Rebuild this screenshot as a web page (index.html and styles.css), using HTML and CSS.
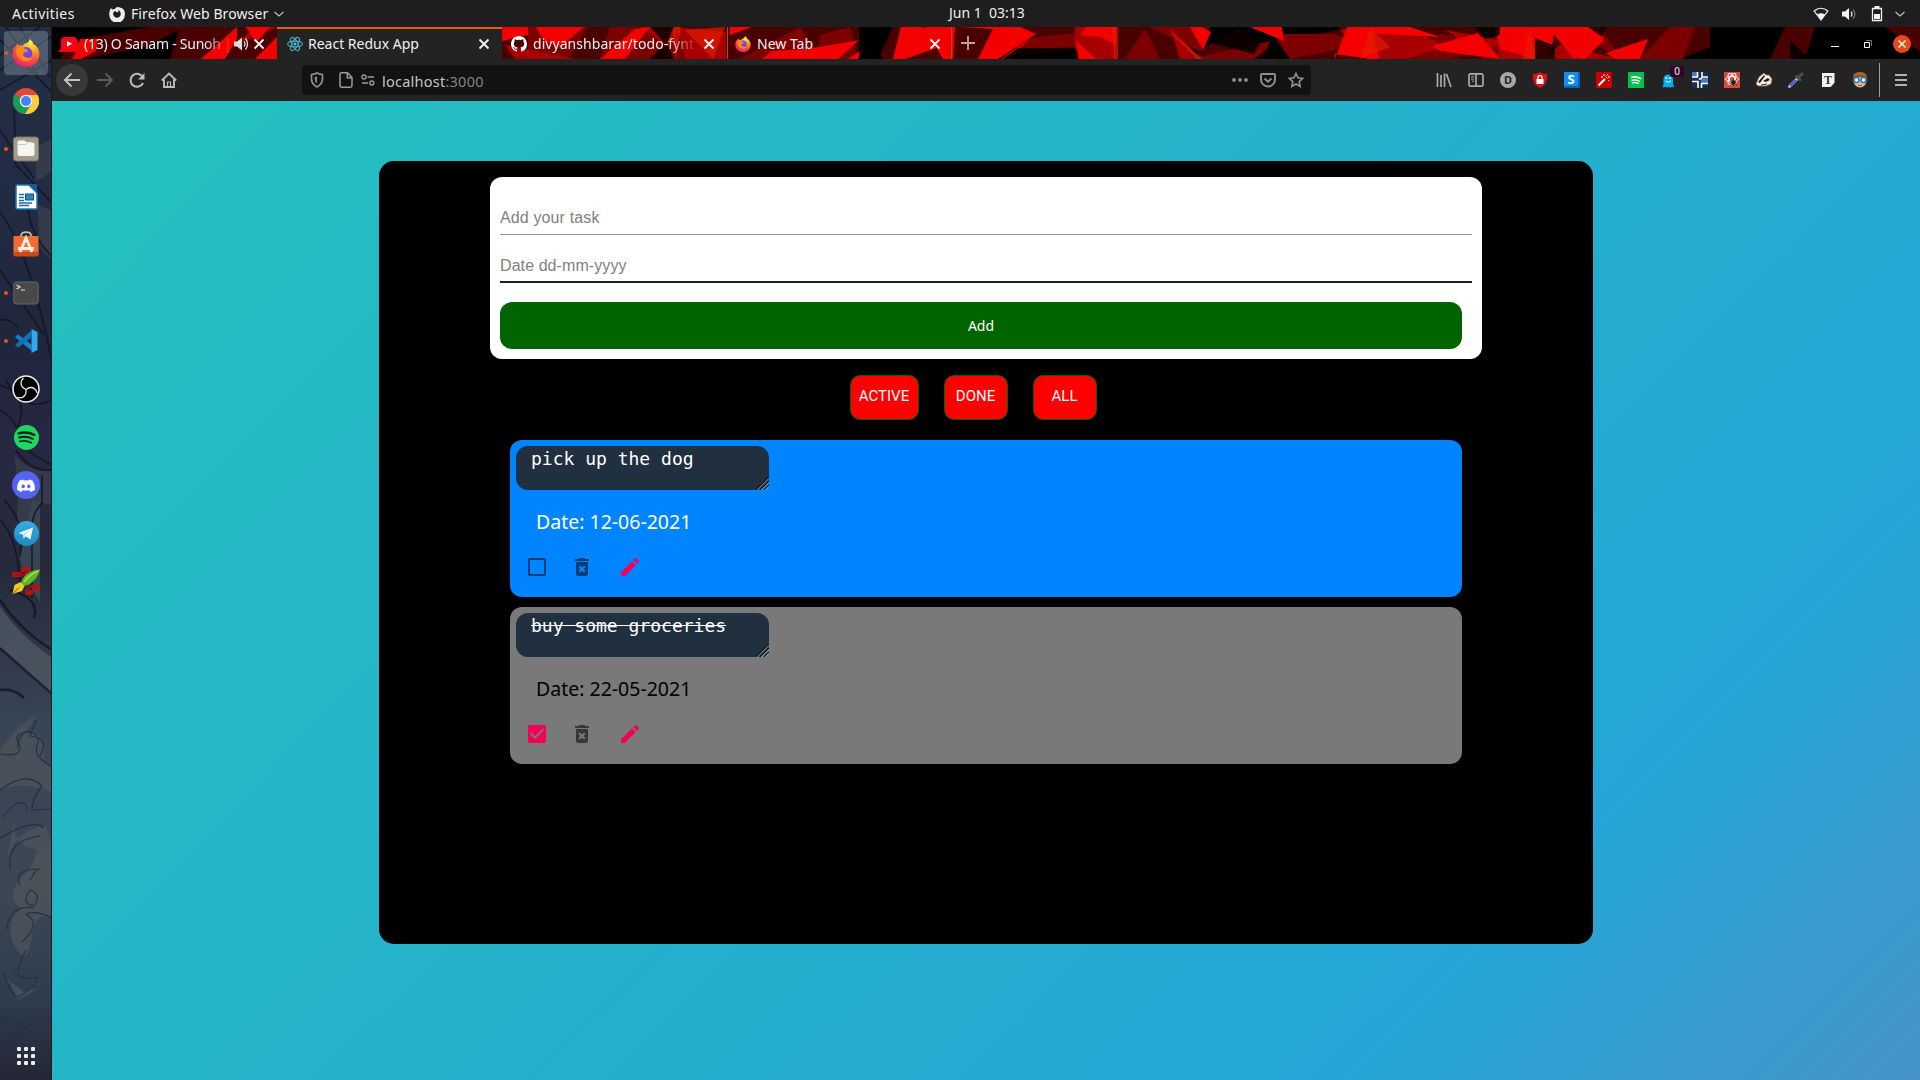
FILE: index.html
```html
<!DOCTYPE html>
<html lang="en">
<head>
<meta charset="utf-8">
<title>React Redux App</title>
<link rel="stylesheet" href="styles.css">
</head>
<body>
<svg class="defs" width="0" height="0">
  <defs>
    <radialGradient id="flame" cx="0.7" cy="0.1" r="1"><stop offset="0" stop-color="#fff44f"/><stop offset=".35" stop-color="#ffa81f"/><stop offset=".65" stop-color="#ff4f3e"/><stop offset="1" stop-color="#e21a7a"/></radialGradient>
    <radialGradient id="globe" cx=".5" cy=".3" r=".7"><stop offset="0" stop-color="#5a5cf0"/><stop offset="1" stop-color="#9a2ad8"/></radialGradient>
    <linearGradient id="telegram" x1="0" y1="0" x2="0" y2="1"><stop offset="0" stop-color="#37aee2"/><stop offset="1" stop-color="#1e88c4"/></linearGradient>
    <linearGradient id="wallpaper" x1="0" y1="0" x2="0" y2="1"><stop offset="0" stop-color="#232f42"/><stop offset=".12" stop-color="#222d45"/><stop offset=".3" stop-color="#20263c"/><stop offset=".4" stop-color="#272743"/><stop offset=".52" stop-color="#252b3d"/><stop offset=".66" stop-color="#384555"/><stop offset=".82" stop-color="#3d4753"/><stop offset=".92" stop-color="#2e3d4f"/><stop offset="1" stop-color="#242634"/></linearGradient>
    <symbol id="firefox" viewBox="0 0 26 26">
      <path fill="url(#flame)" d="M5 4c.6 1 1 1.600 2 2.400C8 6 9 6 10 6.300c1-1.500 2.800-2.400 4-2.500 1-.8 2-2.200 2.300-3.800 2 1.500 3.200 3.200 3.700 5 1.500.8 2 .6 2.500 1.500 2 2.500 3 5 3 8C25.500 21 20 26 13 26S.5 21 .5 14c0-3 1-5 2-6.500C3.500 6.500 4.500 5.500 5 4z"/>
      <circle cx="13" cy="13.500" r="6" fill="url(#globe)"/>
      <path fill="#ff8a16" d="M4 9c2-1.500 4-1.500 6-1 1.500 1 2.500 2 5 2.200-.5 1.800-3 2-4.200 2.600-.8 1.200-.6 3 1 4C15 18.200 17 17 19 17.500 17 20.500 13 21.500 9.500 20 5.500 18 3 14 4 9z"/>
    </symbol>
    <symbol id="spotify" viewBox="0 0 24 24">
      <circle cx="12" cy="12" r="12" fill="#1ed760"/>
      <g fill="none" stroke="#12241a" stroke-linecap="round"><path stroke-width="2.300" d="M4.500 8c5-1.300 10.500-.8 15 1.500"/><path stroke-width="2" d="M5 12c4.500-1.200 9-.7 13 1.300"/><path stroke-width="1.600" d="M5.500 15.700c4-.9 7.800-.5 11.200 1.300"/></g>
    </symbol>
    <symbol id="close" viewBox="0 0 16 16"><path d="M3.500 3.500l9 9M12.500 3.500l-9 9" stroke="#f2f2f2" stroke-width="1.900" fill="none"/></symbol>
    <symbol id="bin" viewBox="0 0 24 24"><path d="M6 19c0 1.100.9 2 2 2h8c1.100 0 2-.9 2-2V7H6v12zm2.460-7.120l1.410-1.410L12 12.590l2.120-2.120 1.410 1.410L13.410 14l2.120 2.120-1.410 1.410L12 15.410l-2.120 2.120-1.410-1.410L10.590 14l-2.130-2.120zM15.500 4l-1-1h-5l-1 1H5v2h14V4z"/></symbol>
    <symbol id="pencil" viewBox="0 0 24 24"><path d="M3 17.250V21h3.750L17.810 9.940l-3.750-3.750L3 17.250zM20.710 7.040c.39-.39.39-1.020 0-1.410l-2.340-2.340c-.39-.39-1.020-.39-1.410 0l-1.830 1.830 3.750 3.750 1.830-1.830z"/></symbol>
    <symbol id="grip" viewBox="0 0 13 13"><path d="M0 13L13 0M4 13l9-9M8 13l5-5" stroke="#10161c" stroke-width="1.300"/><path d="M1.300 13L13 1.300M5.300 13L13 5.300M9.300 13L13 9.300" stroke="#a9b0b5" stroke-width=".9"/></symbol>
  </defs>
</svg>

<header class="topbar">
  <div class="topbar-left">
    <span class="activities">Activities</span>
    <svg class="moz" width="16" height="16" viewBox="0 0 16 16"><path fill="#eee" fill-rule="evenodd" d="M2 2l1.200 1.500C4 3 5 2.800 6 3c.5-1 1-1.500 2-2 3 .2 5 1 6 2l1 1c1 2 1 3.500.8 5A7.700 7.700 0 0 1 .3 9C0 6.500.8 4 2 2zm4.500 3C5 5 5 6 4 7.500 4.500 11 6.500 12 8.500 11.800c2-.3 3.500-2 3.200-4.300C11.500 5.800 10.500 4.500 9.300 4 9.500 5 9.500 6 8.500 6.300 7.500 6.500 7 6 6.500 5z"/></svg>
    <span class="appname">Firefox Web Browser</span>
    <svg width="12" height="12" viewBox="0 0 12 12"><path d="M1.500 4l4.500 4 4.500-4" fill="none" stroke="#bbb" stroke-width="1.300"/></svg>
  </div>
  <div class="clock">Jun 1&nbsp; 03:13</div>
  <div class="topbar-right">
    <svg width="16" height="16" viewBox="0 0 16 16"><path d="M1.200 5C5 1.300 11 1.300 14.800 5L8 14z" fill="none" stroke="#eee" stroke-width="1.200"/><path d="M4 8.500q4-2.500 8 0L8 14z" fill="#f2f2f2"/></svg>
    <svg width="16" height="16" viewBox="0 0 16 16"><path d="M1 5.500h3L8 2v12L4 10.500H1z" fill="#f2f2f2"/><path d="M10 5.500q2 2.500 0 5" fill="none" stroke="#ccc" stroke-width="1.400"/><path d="M12 3.500q4 4.500 0 9" fill="none" stroke="#777" stroke-width="1.200"/></svg>
    <svg width="16" height="16" viewBox="0 0 16 16"><path d="M3.500 2.500h9v12h-9z" fill="none" stroke="#f2f2f2" stroke-width="1.300"/><path d="M5.500 0h5v2h-5zM5 8h6v5H5z" fill="#f2f2f2"/></svg>
    <svg class="sys-chevron" width="12" height="12" viewBox="0 0 12 12"><path d="M1.500 4l4.500 4 4.500-4" fill="none" stroke="#bbb" stroke-width="1.300"/></svg>
  </div>
</header>

<div class="desktop">
<nav class="dock">
  <svg class="wallpaper" width="52" height="1053" viewBox="0 27 52 1053" preserveAspectRatio="none">
    <rect y="27" width="52" height="1053" fill="url(#wallpaper)"/>
    <g fill="#3c4350" opacity=".7"><path d="M36 148q10-8 16-8v30q-10 10-16 10zM38 205l14 6v48q-12-6-13-20zM14 455q20 20 38 15v35l-14-3-16 50-6-22q4-40-2-75z"/><path fill="#45505b" d="M20 560l12-60 8 2v100l-12-20z"/><path fill="#525d66" d="M0 606q18 28 52 52v38Q16 664 0 648z"/><path fill="#4e565c" d="M0 750q20-28 36-34l-10 16q20 0 18 26l8 12v22q-30-12-52-2zM5 870Q10 830 46 826l6 20v70q-18-4-20 20-4 30-15 14-15-24 4-42-16-10 0-30 14-12 16-28-26-6-23-30zM8 980l16 12 14-4-20 12z"/></g>
    <g fill="none" stroke="#10131f" stroke-width="1.800" opacity=".75"><path d="M0 40l52 52M6 27l32 48M20 27l30 50M0 70l52-34M0 90l52-30M0 55l40-28"/><path d="M14 110l2 55 36 38M0 130q20 30 34 48M0 212q30 40 52 150M30 185q-10 38 22 72M0 270l44 65M0 320q10-2 18 8M0 385q30 10 18 42-4 20 34 38M6 380q16 34 46 20M0 410q20 12 18 30M16 450q14 22 36 20M42 475v28q-10 10-10 25v70M4 500q22 22 16 55M0 520q18 18 20 65"/><path d="M0 600q20 30 52 50M0 648q20 18 52 46M10 590q30 8 24 28M0 690q14-2 24 8" stroke-width="2.600"/></g>
    <g fill="none" stroke="#213146" stroke-width="1.200"><path d="M0 754q26 4 18-12-4-10 12-10M36 720l-6 16q20 2 10 20M17 748q4-20 14-16 10 4 6 14t14 20M0 790q26-20 42-4-10 12-10 24l20-1M2 818q20-26 26-8M0 838q34-20 44-10M10 870q-4-30 30-34M20 885q-8-16 20-16M30 880l6-10M30 890q-10 14 4 16 8-12-4-16M6 930q4-26 28-22M22 942q20-18 4-28 10-4 26 4M26 950q-8 14-8 22M3 973q8 22 15 24 18-10 20-20-10 4-24-4M0 1018q12-2 22 8M14 1034l18-10M10 1050l22 6"/></g>
    <path d="M51.500 27v1053" stroke="#151b25"/>
  </svg>
  <div class="dock-item active running"><svg width="28" height="28"><use href="#firefox"/></svg></div>
  <div class="dock-item"><svg width="26" height="26" viewBox="0 0 26 26"><circle cx="13" cy="13" r="13" fill="#de4b3c"/><path d="M13 13L1.700 6.500A13 13 0 0 0 12 26l6.500-9.500z" fill="#169d58"/><path d="M13 7h11.600A13 13 0 0 1 12 26l6.500-10z" fill="#fdcb3d"/><circle cx="13" cy="13" r="6.300" fill="#eef"/><circle cx="13" cy="13" r="5" fill="#4284f3"/></svg></div>
  <div class="dock-item running"><svg width="26" height="26" viewBox="0 0 26 26"><rect x=".5" y="1" width="25" height="24" rx="3" fill="#a39c8c" stroke="#777266"/><path d="M4.500 6q0-1.500 1.500-1.500h5q1.500 0 2 1.500l6.500.5q2 0 2 2V18q0 2-2 2h-13q-2 0-2-2z" fill="#f7f5ef"/><path d="M4.500 8.500H13l1.500-1.500" stroke="#c9c4b7" fill="none"/></svg></div>
  <div class="dock-item"><svg width="26" height="26" viewBox="0 0 26 26"><path d="M3 2q0-1 1-1h12l8 8v15q0 1-1 1H4q-1 0-1-1z" fill="#fff" stroke="#1677b5" stroke-width="1.500"/><path d="M16 0h8v8z" fill="#0c5f96"/><path d="M6 10.500h5M6 13.500h5M6 16.500h5M6 19h13M6 21.500h10" stroke="#176ca8" stroke-width="1.300"/><rect x="12.500" y="10" width="8" height="6" fill="#2384c6" stroke="#144e7c"/></svg></div>
  <div class="dock-item software"><svg width="26" height="28" viewBox="0 0 26 28"><path d="M8 9V5.500C8 1 18 1 18 5.500V9" fill="none" stroke="#d7bc98" stroke-width="1.800"/><path d="M.5 6h25v18q0 2-2 2h-21q-2 0-2-2z" fill="#f36a32"/><path d="M.5 22h25v2.500q0 2-2 2h-21q-2 0-2-2z" fill="#c84b20"/><path d="M7 22l6-14 6 14M5 18.500h16" fill="none" stroke="#fff1e6" stroke-width="2.800"/></svg></div>
  <div class="dock-item running"><svg width="26" height="24" viewBox="0 0 26 24"><rect x=".8" y="1" width="24.400" height="22" rx="2.500" fill="#494949" stroke="#666"/><path d="M3.500 4l3.500 2-3.500 2M8 9h4" fill="none" stroke="#ddd" stroke-width="1.200"/></svg></div>
  <div class="dock-item running"><svg width="26" height="26" viewBox="0 0 26 26"><path d="M18.500 1v24l6-3V4z" fill="#2fa8ef"/><path d="M2 9l17 14v-6L5 6.500z" fill="#1583cc"/><path d="M2 17L19 2v7L5 19.500z" fill="#0f71b8"/></svg></div>
  <div class="dock-item"><svg width="28" height="28" viewBox="0 0 28 28"><circle cx="14" cy="14" r="13" fill="#000" stroke="#f2f2f2" stroke-width="1.500"/><g fill="none" stroke="#e9e9e9" stroke-width="1.300"><path d="M14 14.500Q9 12.500 9 8q0-2.500 2.500-5"/><path d="M14 14.500Q9 12.500 9 8q0-2.500 2.500-5" transform="rotate(120 14 14.500)"/><path d="M14 14.500Q9 12.500 9 8q0-2.500 2.500-5" transform="rotate(240 14 14.500)"/></g></svg></div>
  <div class="dock-item"><svg width="25" height="25"><use href="#spotify"/></svg></div>
  <div class="dock-item"><svg width="28" height="28" viewBox="0 0 28 28"><circle cx="14" cy="14" r="14" fill="#5562f2"/><path fill="#fff" fill-rule="evenodd" d="M11 8.500l.7 1q2.300-.4 4.600 0l.7-1q2 .3 3.800 1.300 2.400 4 2.200 9-2.200 1.600-4.500 2.200l-1-1.700 1.200-.6q-4.700 1.800-9.400 0l1.200.6-1 1.700Q7.200 20.400 5 18.800q-.2-5 2.200-9Q9 8.800 11 8.500zm.2 5a1.700 1.900 0 1 0 .01 0zm5.600 0a1.700 1.900 0 1 0 .01 0z"/></svg></div>
  <div class="dock-item"><svg width="25" height="25" viewBox="0 0 25 25"><circle cx="12.500" cy="12.500" r="12.500" fill="url(#telegram)"/><path d="M4.500 12L19 6.500l-2.600 12-4.700-3.300-2 2.500-.7-4z" fill="#f4f9fc"/><path d="M9 13.700L17 8l-6 6-1.300 3.700z" fill="#bcd5e6"/></svg></div>
  <div class="dock-item"><svg width="28" height="28" viewBox="0 0 28 28"><path d="M0 5h9v5H0zM9 0h9v5H9zM20 18h8v5h-8zM13 23h8v5h-8z" fill="#b80f12"/><path d="M13 4v8M5 8h8M16 15v10M18 20h6" stroke="#a40d10" stroke-width="2"/><path d="M9 17C10 9 18 3 28 2.500 26 11 19 18 12 19z" fill="#62b51d"/><path d="M12 15Q17 8 26 4" stroke="#a8e05a" stroke-width="1.500" fill="none"/><path d="M.5 27l2-9 6-3 4 4-2.500 5z" fill="#f2c630"/><path d="M1 26.500l6-6" stroke="#8a5d0a"/></svg></div>
  <div class="dock-item apps"><svg width="18" height="18" viewBox="0 0 18 18" fill="#ececec"><rect width="4" height="4" rx="1"/><rect x="7" width="4" height="4" rx="1"/><rect x="14" width="4" height="4" rx="1"/><rect y="7" width="4" height="4" rx="1"/><rect x="7" y="7" width="4" height="4" rx="1"/><rect x="14" y="7" width="4" height="4" rx="1"/><rect y="14" width="4" height="4" rx="1"/><rect x="7" y="14" width="4" height="4" rx="1"/><rect x="14" y="14" width="4" height="4" rx="1"/></svg></div>
</nav>

<div class="browser">
  <div class="tabstrip">
    <svg class="theme" width="1868" height="32" viewBox="52 27 1868 32">
      <rect x="52" y="27" width="1868" height="32" fill="#000"/>
      <g fill="#4a0000"><path d="M75 40l75-13h35l-40 20-60 12H60zM180 27h60l-40 32h-30zM240 27h37v32h-50zM502 27h225v32H502zM727 27h132v32H727zM893 27h90v32H878zM960 27h160l-20 22-80 6-70 4zM1085 27h100l10 32h-115zM1200 50l40-23 35 32h-80zM1275 40l85-13 20 32h-90zM1340 27h110v32h-120zM1440 27h200l-20 32H1400zM1630 27h80v20l-30 12h-80zM1785 27h30l-10 32h-35zM1885 27h35v25z"/></g>
      <g fill="#7d0000"><path d="M528 27h60l-20 32h-40zM610 27h60l20 32h-90zM740 59l60-32 20 32zM820 35l30-8 8 32h-40zM1000 42l75-9 5 14-65 2zM1125 59l20-30 15 30zM1150 27l50 25 10-25zM1190 59l80-18-7 18zM1290 59l-15-25h60l22 12zM1400 59l40-25 70 10-60 15zM1500 40l80 19h-100zM1560 27h40l20 30zM1640 59l30-32h25l-12 32z"/></g>
      <g fill="#b00000"><path d="M676 27l50 5v27h-40zM505 45l70 14h-60zM640 27h40l-10 20zM1075 27h40v32h-40zM1170 27l30 32h-20zM1340 30l70-3 35 20-40 12h-40zM1495 27h35l10 32h-40zM1560 45l60 14h-75zM235 45l20-18h22zM1445 30l65 12-30 10z" opacity=".9"/></g>
      <g fill="#f40000"><path d="M62 46l18-4v-3h18l-2 12-15 8H72l4-7H58zM201 59l36-32v12l-12 20zM255 59l22-22v22zM246 27h24l-14 16zM502 27h26v8l-26 6zM536 27h48l-24 20-16-6zM600 59l35-30 15-2-25 32zM740 27h12l-22 8v-8zM762 59l10-8 35-2 60-10-9 2-20 18h10l18-12-8 12zM893 59l8-32h22l22 18-40 14zM925 27h30l-2 32h-10zM960 27h60l16 7-38 25h-20l15-30zM1076 40l20 19h-17zM1080 35l6-8h30v18l-15-8zM1190 27h12l9 5-8 18zM1250 27h32l2 14zM1335 59l12-32h24l8 32h-8l-36-5zM1350 27h60l30 10-60-3zM1432 46l46-13 22 26-60-8zM1495 27h80l28 14-18 18h-5l-25-32-5 32h-16l-34-10zM1548 27h52l4 14-30 18zM1606 53l42-14-8 20h-25z"/></g>
      <g fill="#e81c00" opacity=".65"><path d="M672 27l4 32 5-32zM685 30l40-3-12 32zM1000 59l30-20-22 20zM1112 27l2 32h4V27zM1165 27l38 32h-6zM1370 27l20 20-30 12zM1530 27l5 32h-12z"/></g>
      <g fill="#000" opacity=".8"><path d="M650 27h24l-8 18zM650 59l16-17 8 17zM859 30l25 29h-25zM1018 48h58l2 11h-75zM1210 40l20-13h20l14 9-10 18-40-10zM1254 59l20-15 15 15zM1475 27h25v8l-15 4zM1535 38l20 8v13h-20zM1588 27h18l-4 10zM1790 40l20 19h-20z"/></g>
    </svg>
    <div class="tab">
      <svg width="16" height="16" viewBox="0 0 16 16"><rect y="1" width="16" height="13" rx="3.500" fill="#ff0017"/><path d="M6 5l5 2.800L6 10.500z" fill="#fff"/></svg>
      <span class="tab-title fade t1">(13) O Sanam - Sunoh |</span>
      <svg class="sound" width="16" height="16" viewBox="0 0 16 16"><path d="M1 5.500h3L9 1.500v13l-5-4H1z" fill="#ddd"/><path d="M11 5.500q2 2.500 0 5M12.500 2.500q4 5.500 0 11" fill="none" stroke="#ddd" stroke-width="1.300"/></svg>
      <svg class="x1" width="16" height="16"><use href="#close"/></svg>
    </div>
    <div class="tab selected">
      <svg width="16" height="16" viewBox="0 0 16 16"><g fill="none" stroke="#4fa9c4" stroke-width="1.100"><ellipse cx="8" cy="8" rx="7.300" ry="2.900"/><ellipse cx="8" cy="8" rx="7.300" ry="2.900" transform="rotate(60 8 8)"/><ellipse cx="8" cy="8" rx="7.300" ry="2.900" transform="rotate(120 8 8)"/></g><circle cx="8" cy="8" r="1.500" fill="#53c1de"/></svg>
      <span class="tab-title t2">React Redux App</span>
      <svg class="x" width="16" height="16"><use href="#close"/></svg>
    </div>
    <div class="tab">
      <svg width="16" height="16" viewBox="0 0 16 16"><path fill="#fff" d="M8 0C3.580 0 0 3.580 0 8c0 3.540 2.290 6.530 5.470 7.590.4.070.55-.17.55-.38 0-.19-.01-.82-.01-1.490-2.010.37-2.530-.49-2.690-.94-.09-.23-.48-.94-.82-1.130-.28-.15-.68-.52-.01-.53.63-.01 1.080.58 1.230.82.72 1.210 1.870.87 2.330.66.070-.52.28-.87.51-1.070-1.780-.2-3.640-.89-3.640-3.950 0-.87.31-1.590.82-2.150-.08-.2-.36-1.020.080-2.120 0 0 .67-.21 2.200.82.64-.18 1.320-.27 2-.27s1.360.090 2 .27c1.530-1.040 2.200-.82 2.200-.82.44 1.100.16 1.920.080 2.120.51.56.82 1.270.82 2.150 0 3.070-1.870 3.750-3.650 3.950.29.25.54.73.54 1.480 0 1.070-.01 1.930-.01 2.200 0 .21.15.46.55.38A8.010 8.010 0 0 0 16 8c0-4.420-3.580-8-8-8z"/></svg>
      <span class="tab-title fade t3">divyanshbarar/todo-fynt</span>
      <svg class="x" width="16" height="16"><use href="#close"/></svg>
    </div>
    <div class="tab lined">
      <svg width="16" height="16"><use href="#firefox"/></svg>
      <span class="tab-title t4">New Tab</span>
      <svg class="x" width="16" height="16"><use href="#close"/></svg>
    </div>
    <div class="newtab"><svg width="16" height="16" viewBox="0 0 16 16"><path d="M8 1v14M1 8h14" stroke="#b9a3a3" stroke-width="1.800"/></svg></div>
    <div class="window-controls">
      <svg width="16" height="16" viewBox="0 0 16 16"><path d="M4 10.500h8" stroke="#fff"/></svg>
      <svg width="16" height="16" viewBox="0 0 16 16"><path d="M4.500 6.500h5v5h-5z" fill="#000" stroke="#fff"/><path d="M6 4.500h5.500V10" fill="none" stroke="#777"/></svg>
      <svg width="18" height="18" viewBox="0 0 18 18"><circle cx="9" cy="9" r="9" fill="#e2491b"/><path d="M5.500 5.500l7 7M12.500 5.500l-7 7" stroke="#fff" stroke-width="1.400"/></svg>
    </div>
  </div>

  <div class="toolbar">
    <div class="nav">
      <div class="tool back"><svg width="18" height="18" viewBox="0 0 18 18"><path d="M17 9H2M8.500 2.500L2 9l6.500 6.500" fill="none" stroke="#c0c0c0" stroke-width="2"/></svg></div>
      <div class="tool"><svg width="18" height="18" viewBox="0 0 18 18"><path d="M1 9h15M9.500 2.500L16 9l-6.500 6.500" fill="none" stroke="#5b5b5b" stroke-width="2"/></svg></div>
      <div class="tool"><svg width="16" height="16" viewBox="0 0 16 16"><path d="M14 5.500A6.500 6.500 0 1 0 14 11" fill="none" stroke="#bbb" stroke-width="2"/><path d="M15.500 1v6.500H9z" fill="#bbb"/></svg></div>
      <div class="tool"><svg width="16" height="16" viewBox="0 0 16 16"><path d="M.8 8.500L8 1.500l7.200 7M3 7.500V15h10V7.500" fill="none" stroke="#bbb" stroke-width="1.900"/><path d="M6.500 15v-5h3v5" fill="none" stroke="#bbb" stroke-width="1.200"/></svg></div>
    </div>
    <div class="urlbar">
      <svg class="shield" width="16" height="16" viewBox="0 0 16 16"><path d="M8 1c2 1 3.500 1.200 5.500 1.500V7c0 4-2 6-5.500 8C4.500 13 2.500 11 2.500 7V2.500C4.500 2.200 6 2 8 1z" fill="none" stroke="#8f8f8f" stroke-width="1.700"/><path d="M8 4.500V11.500C6.500 10 5.800 9 5.800 7V5z" fill="#8f8f8f"/></svg>
      <svg class="doc" width="16" height="16" viewBox="0 0 16 16"><path d="M3.500.8h6L14 5.500v8q0 1.700-1.700 1.700H3.700Q2 15.200 2 13.500v-11Q2 .8 3.500.8zM9.300 1v4.700H14" fill="none" stroke="#9a9a9a" stroke-width="1.500"/></svg>
      <svg class="perms" width="16" height="16" viewBox="0 0 16 16"><g fill="none" stroke="#9a9a9a" stroke-width="1.400"><circle cx="4" cy="5" r="2"/><path d="M7.500 5H14M2 11h6"/><circle cx="11.800" cy="11" r="2"/></g></svg>
      <span class="url">localhost<span class="port">:3000</span></span>
      <div class="url-actions">
        <svg width="16" height="16" viewBox="0 0 16 16" fill="#8f8f8f"><circle cx="2" cy="8" r="1.900"/><circle cx="8" cy="8" r="1.900"/><circle cx="14" cy="8" r="1.900"/></svg>
        <svg width="16" height="16" viewBox="0 0 16 16"><path d="M2 2h12q1 0 1 1v4.500a7 7 0 0 1-14 0V3q0-1 1-1zM4.500 6.500L8 9.800l3.500-3.300" fill="none" stroke="#8f8f8f" stroke-width="1.900"/></svg>
        <svg width="16" height="16" viewBox="0 0 16 16"><path d="M8 1.500l2 4.300 4.700.6-3.500 3.200.9 4.700L8 12l-4.100 2.300.9-4.700L1.300 6.400 6 5.800z" fill="none" stroke="#8f8f8f" stroke-width="1.700"/></svg>
      </div>
    </div>
    <div class="extensions">
      <div class="tool"><svg width="16" height="16" viewBox="0 0 16 16"><path d="M1.500 1v14M5 3v12M8.500 1.500V15M10.500 2L15 15" stroke="#a9a9a9" stroke-width="1.700"/></svg></div>
      <div class="tool"><svg width="16" height="16" viewBox="0 0 16 16"><path d="M2.500 1.800h11q1.500 0 1.500 1.700v9q0 1.700-1.500 1.700h-11Q1 14.200 1 12.500v-9q0-1.700 1.500-1.700zM8 2v12" fill="none" stroke="#a9a9a9" stroke-width="1.700"/><path d="M3 4.800h3M3 7h3M4 9.200h2" stroke="#a9a9a9"/></svg></div>
      <div class="tool"><span class="letter-d">D</span></div>
      <div class="tool"><svg width="16" height="16" viewBox="0 0 16 16"><path d="M8 0c2 1.500 4 2 7 2 .3 7-1 11-7 14C2 13 .7 9 1 2c3 0 5-.5 7-2z" fill="#e30d18"/><path d="M4.500 7h7v5h-7z" fill="#fff"/><path d="M6 7V5.500c0-2.500 4-2.500 4 0V7" fill="none" stroke="#fff" stroke-width="1.300"/></svg></div>
      <div class="tool"><span class="letter-s">S</span></div>
      <div class="tool"><svg width="16" height="16" viewBox="0 0 16 16"><path d="M0 0h16v16H0z" fill="#c80000"/><path d="M2.500 13.500l6.500-6.500" stroke="#fff" stroke-width="2.200"/><path d="M9.500 4.500l2 2M8 2v2M12 2l-1 1.500M14 5h-2M13 9l-1-1M5 5h2" stroke="#fff" fill="none"/></svg></div>
      <div class="tool"><svg width="16" height="16" viewBox="0 0 16 16"><path d="M0 0h16v16H0z" fill="#07bf4e"/><g fill="none" stroke="#fff"><path d="M3 5.500q5-1.500 10 1.200" stroke-width="1.700"/><path d="M3.500 8.500q4.500-1.200 8.500 1" stroke-width="1.400"/><path d="M4 11q4-.9 7 .8" stroke-width="1.200"/></g></svg></div>
      <div class="tool ghost"><svg width="16" height="16" viewBox="0 0 16 16"><path d="M2.500 15.500L3.500 12V6.500a4.800 4.800 0 0 1 9.500 0V12l1.300 3.500-2.300-.7-1.700 1-1.500-1-1.500 1-1.600-1z" fill="#00aef0"/><circle cx="6.500" cy="6" r="1" fill="#fff"/><circle cx="10.200" cy="6" r="1" fill="#fff"/><path d="M5.500 9q3 2.500 5.500 0" stroke="#fff" fill="none"/></svg><span class="count">0</span></div>
      <div class="tool"><svg width="16" height="16" viewBox="0 0 16 16"><path d="M0 0h16v16H0z" fill="#182e52"/><path d="M8 6h8v5H9V8zM0 0h5v5H0z" fill="#447cc4"/><path d="M5.500 0v5H0M10 0v5H16M0 9.500h6V16M7 7.500l3-1.500M9.500 16v-4.500H16" fill="none" stroke="#fff" stroke-width="1.600"/></svg></div>
      <div class="tool"><svg width="16" height="16" viewBox="0 0 16 16"><path d="M0 0h16v16H0z" fill="#de493b"/><g fill="none" stroke="#fff"><ellipse cx="8" cy="7" rx="6.500" ry="2.700"/><ellipse cx="8" cy="7" rx="6" ry="2.700" transform="rotate(60 8 7)"/><ellipse cx="8" cy="7" rx="6" ry="2.700" transform="rotate(120 8 7)"/></g><circle cx="9.500" cy="10.500" r="2.300" fill="#1b1b1b"/><path d="M6 9l7 4M6.500 13l6-5M9.500 7v7" stroke="#1b1b1b" stroke-width=".8"/></svg></div>
      <div class="tool"><svg width="18" height="16" viewBox="0 0 18 16"><path d="M1 12L4 5l5-4 2 2 3 0 3 4-1 5-5 2H3z" fill="#f5efe5" stroke="#ad5d27" stroke-width=".8"/><path d="M3 10l6-7 1 1-5 7zM8 9l5-3 2 2-4 2z" fill="#1c1c1c"/><path d="M6 13l6-1" stroke="#333"/></svg></div>
      <div class="tool"><svg width="16" height="16" viewBox="0 0 16 16"><path d="M1.500 14.500l8-8" stroke="#cdd2ea" stroke-width="2.600" stroke-linecap="round"/><path d="M2 14l6-6" stroke="#2447d8" stroke-width="1.700"/><path d="M8.500 4.500l3.500 3.500M11 5l3-3" stroke="#4b5154" stroke-width="2.800" stroke-linecap="round"/></svg></div>
      <div class="tool"><span class="letter-t">T</span></div>
      <div class="tool"><svg width="16" height="16" viewBox="0 0 16 16"><circle cx="8" cy="9" r="6.500" fill="#e9b483"/><path d="M1 8Q0 1 8 .5 16 1 15 8q-3-3-7-3T1 8z" fill="#8c4c12"/><path d="M1 4Q2 0 8 0t7 5q-5-3-14-1z" fill="#a8661c"/><g fill="#fff" stroke="#1684dd" stroke-width="1.500"><circle cx="4.500" cy="8" r="2.500"/><circle cx="11.500" cy="8" r="2.500"/></g><path d="M6 13.500h4" stroke="#a34a33"/></svg></div>
      <div class="divider"></div>
      <svg class="menu" width="16" height="16" viewBox="0 0 16 16"><path d="M2 3h12M2 8h12M2 13h12" stroke="#b0b0b0" stroke-width="1.900"/></svg>
    </div>
  </div>

  <main class="page">
    <section class="todo">
      <form class="entry">
        <input class="field" placeholder="Add your task">
        <input class="field focused" placeholder="Date dd-mm-yyyy">
        <button class="add" type="button">Add</button>
      </form>
      <div class="filters">
        <button class="filter wide">ACTIVE</button>
        <button class="filter">DONE</button>
        <button class="filter">ALL</button>
      </div>
      <article class="task">
        <div class="note">pick up the dog<svg class="grip" width="13" height="13"><use href="#grip"/></svg></div>
        <p class="date">Date: 12-06-2021</p>
        <div class="actions">
          <svg width="24" height="24" viewBox="0 0 24 24"><path d="M19 5v14H5V5h14m0-2H5c-1.100 0-2 .9-2 2v14c0 1.100.9 2 2 2h14c1.100 0 2-.9 2-2V5c0-1.100-.9-2-2-2z"/></svg>
          <svg class="act-bin" width="24" height="24"><use href="#bin"/></svg>
          <svg class="act-edit" width="24" height="24"><use href="#pencil"/></svg>
        </div>
      </article>
      <article class="task done">
        <div class="note">buy some groceries<svg class="grip" width="13" height="13"><use href="#grip"/></svg></div>
        <p class="date">Date: 22-05-2021</p>
        <div class="actions">
          <svg class="checked" width="24" height="24" viewBox="0 0 24 24"><path d="M19 3H5c-1.110 0-2 .9-2 2v14c0 1.100.89 2 2 2h14c1.110 0 2-.9 2-2V5c0-1.100-.89-2-2-2zm-9 14l-5-5 1.410-1.410L10 14.170l7.590-7.590L19 8l-9 9z"/></svg>
          <svg class="act-bin" width="24" height="24"><use href="#bin"/></svg>
          <svg class="act-edit" width="24" height="24"><use href="#pencil"/></svg>
        </div>
      </article>
    </section>
  </main>
</div>
</div>
</body>
</html>
```
FILE: styles.css
```css
* { box-sizing: border-box; }

body {
  margin: 0;
  width: 1920px;
  height: 1080px;
  overflow: hidden;
  display: flex;
  flex-direction: column;
  background: #1e1e1e;
  font: 14px/20px "Noto Sans", "Open Sans", sans-serif;
  color: #f0f0f0;
}

svg { display: block; flex: none; }
.defs { position: absolute; }

/* System bar */
.topbar {
  height: 27px;
  flex: none;
  display: grid;
  grid-template-columns: 949px auto 1fr;
  align-items: center;
  background: #1e1e1e;
  white-space: nowrap;
}
.topbar-left { display: flex; align-items: center; padding-left: 12px; }
.activities { width: 97px; letter-spacing: .45px; }
.appname { width: 142px; margin-left: 6px; letter-spacing: .1px; }
.clock { padding-bottom: 1px; }
.topbar-right { display: flex; justify-content: flex-end; gap: 12px; padding-right: 14px; }
.sys-chevron { margin: 2px 0 0 -3px; }

.desktop { flex: 1; min-height: 0; display: flex; }

/* Dock */
.dock {
  position: relative;
  width: 52px;
  flex: none;
  display: flex;
  flex-direction: column;
  padding: 2px 0 0;
}
.wallpaper { position: absolute; inset: 0; }
.dock-item {
  position: relative;
  height: 48px;
  flex: none;
  display: flex;
  align-items: center;
  justify-content: center;
}
.dock-item.active::before {
  content: "";
  position: absolute;
  inset: 2px 4px;
  border-radius: 4px;
  background: rgba(150, 165, 185, .38);
}
.dock-item svg { position: relative; }
.dock-item.software { padding-bottom: 3px; }
.dock-item.running::after {
  content: "";
  position: absolute;
  left: 4px;
  top: 22px;
  width: 4px;
  height: 4px;
  border-radius: 50%;
  background: #e95420;
}
.apps { margin-top: auto; }

/* Tabs */
.browser { flex: 1; min-width: 0; display: flex; flex-direction: column; }
.tabstrip { position: relative; height: 32px; flex: none; display: flex; }
.theme { position: absolute; inset: 0; }
.tab {
  position: relative;
  width: 225px;
  flex: none;
  display: flex;
  align-items: center;
  padding: 2px 10px 0 9px;
}
.tab > svg { margin-right: 6px; }
.tab.selected { background: #232323; border-top: 2px solid #ea5b0c; padding-top: 0; }
.tab.selected > svg:first-child { margin-left: 1px; margin-right: 5px; }
.tab.lined { padding-left: 7px; padding-right: 8px; border-left: 1px solid #b0482e; border-right: 1px solid #b0482e; }
.tab-title { white-space: nowrap; }
.tab > .x { margin-left: auto; margin-right: 0; }
.fade { -webkit-mask-image: linear-gradient(90deg, #000 80%, transparent); mask-image: linear-gradient(90deg, #000 80%, transparent); }
.t1 { width: 153px; margin-left: 1px; letter-spacing: -.25px; }
.t3 { width: 166px; letter-spacing: .05px; }
.tab > .sound { margin-left: -1px; margin-right: 2px; }
.tab > .x1 { margin: 0; }
.newtab { position: relative; padding: 8px 0 0 8px; }
.window-controls { position: relative; display: flex; align-items: center; gap: 17px; margin-left: auto; padding: 2px 9px 0 0; }

/* Navigation toolbar */
.toolbar { height: 42px; flex: none; display: flex; align-items: center; background: #232323; }
.nav { display: flex; width: 250px; padding-left: 4px; }
.tool { width: 32px; height: 32px; display: flex; align-items: center; justify-content: center; }
.back { border-radius: 50%; background: #383838; margin-right: 1px; }
.urlbar {
  width: 1009px;
  height: 30px;
  display: flex;
  align-items: center;
  padding: 0 7px;
  border-radius: 4px;
  background: #121212;
}
.doc { margin-left: 13px; }
.perms { margin-left: 6px; }
.url { margin-left: 6px; padding-top: 1px; color: #c6c6c6; font-size: 14.5px; letter-spacing: .24px; }
.port { color: #858585; }
.url-actions { display: flex; gap: 12px; margin-left: auto; }
.extensions { display: flex; align-items: center; margin-left: auto; padding-right: 11px; }
.letter-d { width: 16px; height: 16px; border-radius: 50%; background: #a8a8a8; color: #232323; font: bold 11px/16px "Noto Sans", sans-serif; text-align: center; }
.letter-s { width: 16px; height: 16px; background: #0e8df5; border-right: 2px solid #0763ad; border-bottom: 2px solid #0763ad; color: #fff; font: bold 13px/14px "Noto Sans", sans-serif; text-align: center; }
.letter-t { width: 13px; height: 14px; background: #f3f3f3; color: #333; font: bold 12px/14px "Liberation Serif", serif; text-align: center; clip-path: polygon(0 0, 100% 0, 100% 70%, 70% 100%, 0 100%); }
.ghost { position: relative; }
.count { position: absolute; left: 18px; top: 2px; width: 14px; height: 11px; border-radius: 2px; background: #330330; color: #eee; font: 10px/11px "Noto Sans", sans-serif; text-align: center; }
.divider { width: 1px; height: 34px; margin: 0 13px 0 3px; background: #a0a0a0; }

/* Page */
.page {
  flex: 1;
  min-height: 0;
  padding: 60px 327px 0;
  background: linear-gradient(135deg, #24c1bd 0%, #23a6d5 79%, #4693c9 100%);
}
.todo {
  height: 783px;
  padding: 16px 111px 0;
  border-radius: 15px;
  background: #000;
}
.entry { height: 182px; padding: 21px 10px 0; border-radius: 12px; background: #fff; }
.field {
  display: block;
  width: 100%;
  height: 37px;
  margin: 0;
  padding: 4px 0 0;
  border: 0;
  border-bottom: 1px solid #949494;
  outline: 0;
  background: transparent;
  font: 16px/20px "Liberation Sans", Arial, sans-serif;
  letter-spacing: .13px;
}
.field.focused { height: 38px; margin-top: 10px; padding-top: 5px; border-bottom: 2px solid #212121; letter-spacing: .08px; }
.field::placeholder { color: #7f7f7f; opacity: 1; }
.add {
  display: block;
  width: 962px;
  height: 47px;
  margin-top: 19px;
  padding: 0;
  border: 0;
  border-radius: 12px;
  background: #006400;
  color: #fff;
  font: 14px/20px "Noto Sans", sans-serif;
}
.filters { display: flex; gap: 25px; height: 81px; padding: 16px 0 0 360px; }
.filter {
  width: 64px;
  height: 45px;
  padding: 0 1px 4px 0;
  border: 1px solid #006400;
  border-radius: 10px;
  background: #f00;
  color: #fff;
  font: 15px/20px Roboto, sans-serif;
}
.filter.wide { width: 69px; }
.task {
  height: 157px;
  margin: 0 20px 10px;
  padding: 6px;
  border-radius: 12px;
  background: #0084ff;
  color: #fff;
}
.note {
  position: relative;
  width: 253px;
  height: 44px;
  padding: 2px 15px;
  border-radius: 12px;
  background: #203040;
  color: #fff;
  font: 18px/21px "DejaVu Sans Mono", monospace;
  white-space: nowrap;
}
.grip { position: absolute; right: 0; bottom: 0; }
.date { margin: 18px 0 0 20px; font-size: 19.5px; line-height: 28px; }
.actions { display: flex; margin: 19px 0 0 9px; fill: rgba(0, 0, 0, .54); }
.act-bin { margin-left: 21px; }
.act-edit { margin-left: 24px; fill: #f50057; }
.checked { fill: #f50057; }
.task.done { background: #797979; color: #000; }
.done .note { text-decoration: line-through; }
```
